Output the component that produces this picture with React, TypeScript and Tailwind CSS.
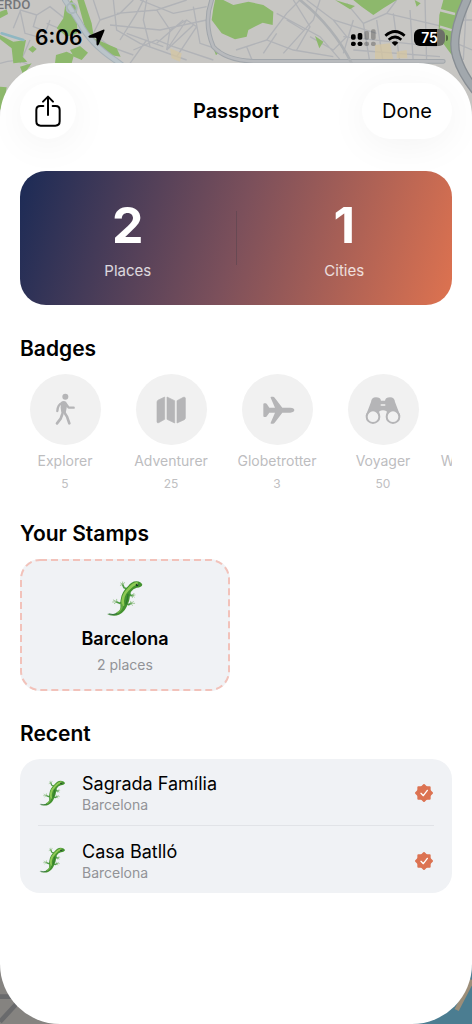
import type { ReactNode } from 'react'

type Badge = {
  name: string
  target: number
  icon: ReactNode
}

type Visit = {
  id: string
  place: string
  city: string
}

const visits: Visit[] = [
  { id: 'sagrada', place: 'Sagrada Família', city: 'Barcelona' },
  { id: 'batllo', place: 'Casa Batlló', city: 'Barcelona' },
]

function WalkIcon() {
  return (
    <svg viewBox="0 0 108 108" className="size-9" fill="none" stroke="currentColor" strokeLinecap="round" strokeLinejoin="round">
      <circle cx="55" cy="14" r="9" fill="currentColor" stroke="none" />
      <path d="M42 30 Q50 24 58 30 L60 42 L56 63 Q50 67 43 62 L41 48 Z" fill="currentColor" stroke="none" />
      <path d="M45 33 Q32 38 31 57" strokeWidth="7" />
      <path d="M57 36 L65 47 H80" strokeWidth="7" />
      <path d="M50 58 L60 74 L67 94" strokeWidth="8" />
      <path d="M46 66 L41 80 L30 94" strokeWidth="8" />
    </svg>
  )
}

function MapIcon() {
  return (
    <svg viewBox="0 0 108 108" className="size-9" fill="currentColor" stroke="currentColor" strokeWidth="2" strokeLinejoin="round">
      <path d="M12 30 Q12 26 16 24 L35 15 V82 L17 92 Q12 94 12 89 Z" />
      <path d="M42 15 L65 26 V93 L42 82 Z" />
      <path d="M72 26 L91 16 Q97 14 97 19 V78 Q97 81 94 83 L72 93 Z" />
    </svg>
  )
}

function PlaneIcon() {
  return (
    <svg viewBox="0 0 108 108" className="size-9" fill="currentColor">
      <path d="M13 37 Q13 34 16 34 H20 Q22 34 24 37 L31 47 H48 L35 17 Q34 14 37 14 H42 Q45 14 47 17 L70 47 H94 Q106 48 106 54 Q106 61 94 62 H70 L47 92 Q45 95 42 95 H37 Q34 95 35 92 L48 62 H31 L24 72 Q22 75 20 75 H16 Q13 75 13 72 Z" />
    </svg>
  )
}

function BinocularsIcon() {
  return (
    <svg viewBox="0 0 108 108" className="size-9">
      <path
        d="M2 72 L18 30 Q19 16 33 16 Q46 16 48 26 H60 Q62 16 75 16 Q89 16 90 30 L106 72 L66 74 L65 58 Q54 52 43 58 L42 74 Z"
        fill="currentColor"
      />
      <path d="M49 39 H59" stroke="#f1f1f1" strokeWidth="5" strokeLinecap="round" />
      <circle cx="24" cy="74" r="19" fill="#f1f1f1" stroke="currentColor" strokeWidth="6" />
      <circle cx="84" cy="74" r="19" fill="#f1f1f1" stroke="currentColor" strokeWidth="6" />
    </svg>
  )
}

function GlobeIcon() {
  return (
    <svg viewBox="0 0 108 108" className="size-9" fill="none" stroke="currentColor" strokeWidth="6">
      <circle cx="54" cy="54" r="40" />
      <ellipse cx="54" cy="54" rx="18" ry="40" />
      <path d="M14 54 H94" />
    </svg>
  )
}

const badges: Badge[] = [
  { name: 'Explorer', target: 5, icon: <WalkIcon /> },
  { name: 'Adventurer', target: 25, icon: <MapIcon /> },
  { name: 'Globetrotter', target: 3, icon: <PlaneIcon /> },
  { name: 'Voyager', target: 50, icon: <BinocularsIcon /> },
  { name: 'World Traveler', target: 10, icon: <GlobeIcon /> },
]

function Lizard({ className }: { className: string }) {
  return (
    <svg viewBox="30 30 120 120" className={className} fill="none" strokeLinecap="round" strokeLinejoin="round" aria-hidden="true">
      {/* legs and toes */}
      <g stroke="#4d9c45" strokeWidth="5">
        <path d="M98 60 L87 56 L83 47" />
        <path d="M102 72 L108 80 L113 79" />
        <path d="M84 99 L74 103 L65 99" />
        <path d="M90 101 L101 107 L108 103" />
      </g>
      <g stroke="#7cb46c" strokeWidth="2">
        <path d="M83 46 L76 49 M83 46 L77 42 M83 46 L83 39 M83 46 L89 41" />
        <path d="M113 79 L120 78 M113 79 L118 84 M113 79 L112 86 M113 79 L117 73" />
        <path d="M65 98 L55 93 M65 98 L53 99 M65 98 L58 104 M65 98 L65 91" />
        <path d="M108 103 L115 98 M108 103 L119 103 M108 103 L112 109 M108 103 L107 97" />
      </g>
      {/* body */}
      <path
        d="M35 134 Q60 141 73 126 C80 117 74 105 77 92 C79 76 87 62 99 52 C105 43 113 37 125 37 Q138 38 142 47 Q140 55 125 56 Q114 59 108 68 C103 80 106 92 98 105 C93 122 79 140 57 140 Q43 140 35 134 Z"
        fill="#43922f"
      />
      <path d="M84 108 C81 92 86 75 99 62 C108 52 113 46 125 43" stroke="#8fca55" strokeWidth="8" />
      <path d="M82 108 Q81 124 66 132" stroke="#6cb149" strokeWidth="5" />
      <path d="M99 76 Q98 92 93 105" stroke="#2f7a2c" strokeWidth="4" />
      <path d="M42 135 Q54 139 66 134" stroke="#2f6f3c" strokeWidth="3" />
      <circle cx="126" cy="48" r="4" fill="#173f20" />
      <circle cx="127" cy="47" r="1" fill="#d8efc0" />
    </svg>
  )
}

function VerifiedSeal() {
  return (
    <svg viewBox="0 0 60 60" className="size-5 shrink-0" role="img" aria-label="Visited">
      <g fill="#dc7352" stroke="#dc7352" strokeWidth="6" strokeLinejoin="round">
        <rect x="13" y="13" width="34" height="34" />
        <rect x="13" y="13" width="34" height="34" transform="rotate(45 30 30)" />
      </g>
      <path d="M21 31 L28 38 L40 22" fill="none" stroke="#fff" strokeWidth="4" strokeLinecap="round" strokeLinejoin="round" />
    </svg>
  )
}

function MapBackdrop() {
  return (
    <svg
      viewBox="0 0 1416 3072"
      preserveAspectRatio="xMidYMin slice"
      className="absolute inset-0 h-full w-full"
      fill="none"
      aria-hidden="true"
    >
      <rect width="1416" height="3072" fill="#c7c6c3" />
      {/* side streets */}
      <g stroke="#b1b3b7" strokeWidth="4">
        <path d="M40 85 L62 30 L110 45 L150 20 L200 60 M60 30 L75 100 L130 115 L150 60 M0 190 Q60 170 90 200 M90 120 L60 190 M140 70 L190 90 M110 45 L100 80 L140 95" />
        <path d="M280 0 L300 60 L280 100 L330 140 L400 165 M300 60 L360 40 L400 0 M340 0 L350 90 L420 130 L560 180 M350 40 L470 30 L560 0 M330 75 L480 90 L620 60 M360 120 L410 40 L430 0 M440 0 L430 60 L450 140 M470 30 L510 90 L500 150 M510 90 L560 60 L590 80 L530 170 M560 60 L500 150 M580 20 L600 130 L660 150 M380 100 L490 140" />
        <path d="M470 130 L550 60 M500 150 L580 75 M400 150 L470 120 L520 140 L640 180 M420 0 L520 40 L620 20 M300 130 L350 180 M390 190 L440 120" />
        <path d="M708 150 L800 120 L880 150 L1000 170 M800 120 L860 40 L900 0 M830 40 L960 110 L1030 190 M880 0 L930 80 L890 150 M920 0 L1000 60 L1130 100 M960 0 L940 60 L850 160 M860 60 L910 90 M1000 60 L1040 110 L1000 150 L930 110 M790 160 L830 100 M740 140 L760 190" />
        <path d="M1040 10 L1090 70 L1160 40 L1190 0 M1060 60 L1030 160 M1090 70 L1110 190 M1130 60 L1150 190 M1180 40 L1200 190 M1230 30 L1240 190 M1030 110 L1310 140 M1060 150 L1320 170 M1160 40 L1330 80 M1275 0 L1280 190 M1380 60 H1416 M1370 130 L1416 150 M1400 0 L1390 180" />
      </g>
      {/* parks */}
      <g fill="#8db86c">
        <path d="M195 20 L215 0 L230 25 L232 100 L200 110 L170 85 L190 55 Z" />
        <path d="M232 0 L252 0 L275 70 L282 115 L350 145 L362 170 L330 165 L285 135 L258 95 Z" />
        <path d="M0 105 L40 125 L78 120 L68 170 L82 185 L40 190 L35 145 L0 118 Z" />
        <path d="M85 148 L98 137 L110 147 L98 158 Z" />
        <path d="M168 165 L200 155 L222 165 L215 190 L165 190 Z M210 150 L240 138 L264 158 L245 180 L222 170 Z" />
        <path d="M0 35 L20 28 L24 42 L0 55 Z M60 200 L95 190 L70 225 Z M0 260 L20 262 L10 320 L0 330 Z" />
        <path d="M645 0 L640 25 L635 60 L665 100 L705 118 L740 110 L745 90 L788 68 L818 75 L820 35 L790 15 L745 5 L700 15 L670 0 Z" />
        <path d="M1060 0 L1190 0 L1150 25 L1120 45 L1085 20 Z M1005 0 L1065 18 L1050 28 Z M945 108 L970 125 L958 145 Z M640 145 L658 155 L648 166 Z M1244 0 L1262 10 L1250 20 Z" />
        <path d="M1330 0 L1390 0 L1375 80 L1355 165 L1315 110 L1318 45 Z" />
      </g>
      <path d="M1318 30 L1365 42 M1320 80 L1370 95" stroke="#c7c6c3" strokeWidth="7" />
      {/* warm blocks */}
      <g fill="#d6c69f" fillOpacity="0.7">
        <path d="M1125 135 L1170 130 L1180 180 L1125 180 Z M1190 155 L1220 150 L1222 175 L1190 175 Z M510 145 L545 160 L540 185 L515 175 Z" />
      </g>
      {/* main roads */}
      <g strokeLinecap="round">
        <path d="M195 0 L240 70 Q270 130 345 180 L365 195" stroke="#a7b1b8" strokeWidth="18" />
        <path d="M195 0 L240 70 Q270 130 345 180 L365 195" stroke="#bac4c9" strokeWidth="12" />
        <circle cx="215" cy="25" r="15" stroke="#aab7bc" strokeWidth="6" />
        <path d="M635 0 Q610 70 640 140 Q675 180 760 184 L1330 184" stroke="#a1a6ab" strokeWidth="14" />
        <path d="M635 0 Q610 70 640 140 Q675 180 760 184 L1330 184" stroke="#b8babd" strokeWidth="8" />
        <path d="M900 0 Q1000 80 1055 190" stroke="#adb0b3" strokeWidth="8" />
        <path d="M1400 0 Q1350 110 1370 170 Q1385 220 1425 270" stroke="#888e94" strokeWidth="28" />
        <path d="M1400 0 Q1350 110 1370 170 Q1385 220 1425 270" stroke="#a2a8ad" strokeWidth="20" />
        <path d="M5 100 L70 120" stroke="#8fb7c2" strokeWidth="8" />
      </g>
      <text x="91" y="26" textAnchor="end" fill="#74777a" fontSize="40" fontWeight="500" fontFamily="Roboto, sans-serif">
        ERDO
      </text>
      {/* lower corners */}
      <rect y="2780" width="500" height="292" fill="#858380" />
      <path d="M0 3065 L60 3000 M0 2990 H60" stroke="#696a6c" strokeWidth="14" />
      <rect x="900" y="2780" width="516" height="292" fill="#4b7d91" />
      <path d="M1416 2940 L1370 3030" stroke="#9c8e79" strokeWidth="14" />
    </svg>
  )
}

function StatusBar() {
  return (
    <div className="flex h-[63px] items-center justify-between pt-3 pr-6 pl-[35px] text-black">
      <div className="flex items-center gap-1.5">
        <span className="text-[21px] leading-6 font-semibold">6:06</span>
        <svg viewBox="0 0 54 54" className="size-[17px]" fill="currentColor" aria-hidden="true">
          <path d="M48 2 Q54 0 52 6 L34 49 Q30 56 27 49 V32 Q27 28 23 28 L5 28 Q-2 25 4 21 Z" />
        </svg>
      </div>
      <div className="flex items-center gap-2">
        <svg viewBox="0 0 75 54" className="h-[18px] w-[25px]" fill="currentColor" aria-hidden="true">
          <rect x="0" y="16" width="14" height="16" rx="5" />
          <rect x="20" y="12" width="14" height="20" rx="5" />
          <rect x="0" y="38" width="14" height="13" rx="5" />
          <rect x="20" y="38" width="14" height="13" rx="5" />
          <g fillOpacity="0.25">
            <rect x="40" y="6" width="14" height="26" rx="5" />
            <rect x="60" y="1" width="14" height="31" rx="5" />
            <rect x="40" y="38" width="14" height="13" rx="5" />
            <rect x="60" y="38" width="14" height="13" rx="5" />
          </g>
        </svg>
        <svg viewBox="0 0 66 48" className="h-4 w-[22px]" fill="none" stroke="currentColor" strokeWidth="8" aria-hidden="true">
          <path d="M4 17 Q33 -8 62 17" />
          <path d="M14 29 Q33 13 52 29" />
          <path d="M23 38 Q33 30 43 38 L33 48 Z" fill="currentColor" stroke="none" />
        </svg>
        <div className="flex items-center gap-px">
          <div className="flex h-[17px] w-[31px] items-center justify-center rounded-md bg-linear-to-r from-black from-75% to-[#6c6f68] to-75% text-[14px] leading-4 font-semibold text-white">
            75
          </div>
          <span className="h-1.5 w-0.5 rounded-r-sm bg-black/40" />
        </div>
      </div>
    </div>
  )
}

function Stat({ value, label }: { value: number; label: string }) {
  return (
    <div className="flex flex-1 flex-col items-center">
      <span className="text-[50px] leading-[60px] font-bold text-white">{value}</span>
      <span className="mt-[6px] text-[15px] leading-5 text-white/80">{label}</span>
    </div>
  )
}

export default function App() {
  return (
    <div className="relative flex min-h-screen flex-col overflow-hidden font-[Inter,'Noto_Sans',sans-serif]">
      <MapBackdrop />
      <div className="relative flex flex-1 flex-col">
        <StatusBar />
        <main className="flex-1 rounded-t-[54px] rounded-b-[60px] bg-white px-5 pt-5 pb-10 text-black">
          <header className="flex items-center justify-between">
            <div className="flex flex-1">
              <button
                type="button"
                aria-label="Share"
                className="flex size-14 items-center justify-center rounded-full bg-white shadow-[0_6px_40px_rgba(0,0,0,0.05)]"
              >
                <svg viewBox="0 0 96 96" className="size-8" fill="none" stroke="currentColor" strokeWidth="6" strokeLinecap="round" strokeLinejoin="round">
                  <path d="M34 33 H25 Q13 33 13 45 V79 Q13 92 26 92 H70 Q83 92 83 79 V45 Q83 33 71 33 H62" />
                  <path d="M48 60 V6 M33 20 L48 5 L63 20" />
                </svg>
              </button>
            </div>
            <h1 className="text-[20px] leading-7 font-semibold">Passport</h1>
            <div className="flex flex-1 justify-end">
              <button type="button" className="h-14 rounded-full bg-white px-5 text-[20px] leading-7 shadow-[0_6px_40px_rgba(0,0,0,0.05)]">
                Done
              </button>
            </div>
          </header>

          <section className="mt-8 flex items-center rounded-[26px] bg-[linear-gradient(107deg,#1f2c56_2%,#7c505b_50%,#da7150_98%)] py-6">
            <Stat value={2} label="Places" />
            <div className="h-[54px] w-px bg-[#5f4650]/70" />
            <Stat value={1} label="Cities" />
          </section>

          <section className="mt-[30px]">
            <h2 className="text-[21px] leading-7 font-semibold">Badges</h2>
            <ul className="mt-[11px] flex gap-4 overflow-hidden">
              {badges.map((badge) => (
                <li key={badge.name} className="flex w-[90px] shrink-0 flex-col items-center">
                  <div className="flex size-[71px] items-center justify-center rounded-full bg-[#f1f1f1] text-[#b5b5b7]">{badge.icon}</div>
                  <span className="mt-1.5 text-[14px] leading-5 whitespace-nowrap text-[#bdbdbf]">{badge.name}</span>
                  <span className="mt-[5px] text-[12px] leading-4 text-[#c0c0c2]">{badge.target}</span>
                </li>
              ))}
            </ul>
          </section>

          <section className="mt-7">
            <h2 className="text-[21px] leading-7 font-semibold">Your Stamps</h2>
            <div className="mt-[11px] grid grid-cols-2 gap-3">
              <button type="button" className="relative flex flex-col items-center rounded-[20px] bg-[#f0f2f5] pt-5 pb-4">
                <svg className="absolute inset-0 h-full w-full" fill="none" aria-hidden="true">
                  <rect
                    x="1"
                    y="1"
                    rx="19"
                    className="h-[calc(100%-2px)] w-[calc(100%-2px)]"
                    stroke="#f2c2ba"
                    strokeWidth="2"
                    strokeDasharray="7 4"
                  />
                </svg>
                <Lizard className="size-10" />
                <span className="mt-2 text-[18px] leading-6 font-semibold">Barcelona</span>
                <span className="mt-1 text-[14px] leading-5 text-[#929397]">2 places</span>
              </button>
            </div>
          </section>

          <section className="mt-[29px]">
            <h2 className="text-[21px] leading-7 font-semibold">Recent</h2>
            <ul className="mt-[11px] divide-y divide-[#e1e3e7] rounded-[20px] bg-[#f0f2f5] px-[18px]">
              {visits.map((visit) => (
                <li key={visit.id} className="flex h-[67px] items-center pt-0.5">
                  <Lizard className="size-[29px] shrink-0" />
                  <div className="ml-[15px] flex-1">
                    <p className="text-[18px] leading-6">{visit.place}</p>
                    <p className="text-[14px] leading-[18px] text-[#929397]">{visit.city}</p>
                  </div>
                  <VerifiedSeal />
                </li>
              ))}
            </ul>
          </section>
        </main>
      </div>
    </div>
  )
}
